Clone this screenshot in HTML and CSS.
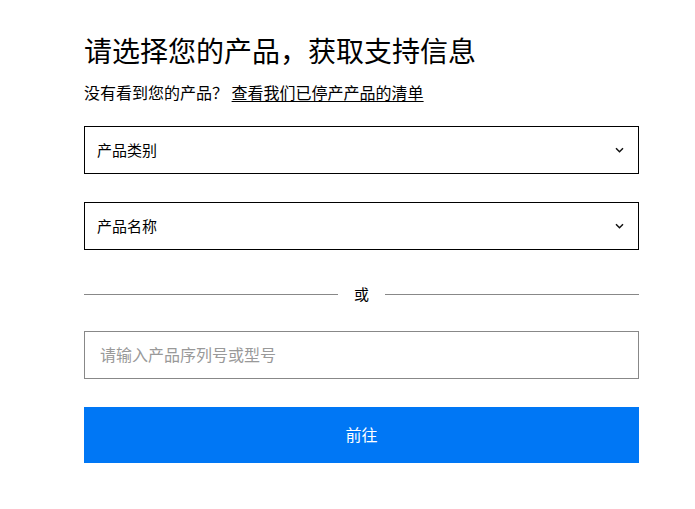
FILE: index.html
```html
<!DOCTYPE html>
<html lang="zh-CN">
<head>
  <meta charset="UTF-8" />
  <meta name="viewport" content="width=device-width, initial-scale=1.0" />
  <title>产品支持</title>
  <link rel="stylesheet" href="styles.css">
</head>
<body>
  <main class="pagina">
    <h1 class="titulo">请选择您的产品，获取支持信息</h1>
    <p class="subtitulo">没有看到您的产品？ <a href="#" class="link">查看我们已停产产品的清单</a></p>

    <div class="campo">
      <span>产品类别</span>
      <svg class="seta" width="9" height="6" viewBox="0 0 9 6"><path d="M1 1.2l3.5 3.5 3.5-3.5" fill="none" stroke="#111" stroke-width="1.5"/></svg>
    </div>

    <div class="campo">
      <span>产品名称</span>
      <svg class="seta" width="9" height="6" viewBox="0 0 9 6"><path d="M1 1.2l3.5 3.5 3.5-3.5" fill="none" stroke="#111" stroke-width="1.5"/></svg>
    </div>

    <div class="divisor">
      <span class="linha"></span>
      <span class="ou">或</span>
      <span class="linha"></span>
    </div>

    <input class="busca" type="text" placeholder="请输入产品序列号或型号" />

    <button class="botao" type="button">前往</button>
  </main>
</body>
</html>
```

FILE: styles.css
```css
/* estilos da pagina de suporte */

body {
  margin: 0;
  background: #fff;
  color: #000;
  font-family: "Noto Sans CJK SC", "Noto Sans", sans-serif;
}

.pagina {
  width: 555px;
  padding: 32px 0 0 84px;
  display: flex;
  flex-direction: column;
}

.titulo {
  margin: 0;
  font-size: 28px;
  font-weight: normal;
  line-height: 36px;
}

.subtitulo {
  margin: 12px 0 0;
  font-size: 16px;
  line-height: 24px;
}

.link {
  color: #000;
  text-decoration: underline;
  text-underline-offset: 2px;
}

.campo {
  margin-top: 22px;
  height: 48px;
  box-sizing: border-box;
  border: 1px solid #000;
  padding: 0 14px 2px 12px;
  display: flex;
  align-items: center;
  justify-content: space-between;
  font-size: 15px;
}

.campo + .campo {
  margin-top: 28px;
}

.seta {
  margin-top: 2px;
}

.divisor {
  margin-top: 32px;
  height: 24px;
  display: flex;
  align-items: center;
  gap: 16px;
  font-size: 15px;
}

.ou {
  margin-top: -2px;
}

.linha {
  flex: 1;
  height: 1px;
  background: #888;
}

.busca {
  margin-top: 25px;
  height: 48px;
  box-sizing: border-box;
  border: 1px solid #888;
  border-radius: 0;
  padding: 0 15px 2px;
  font-family: inherit;
  font-size: 16px;
  color: #000;
  outline: none;
}

.busca::placeholder {
  color: #999;
}

.botao {
  margin-top: 28px;
  height: 56px;
  border: none;
  border-radius: 0;
  padding-bottom: 3px;
  background: #0077f5;
  color: #fff;
  font-family: inherit;
  font-size: 16px;
}
```
